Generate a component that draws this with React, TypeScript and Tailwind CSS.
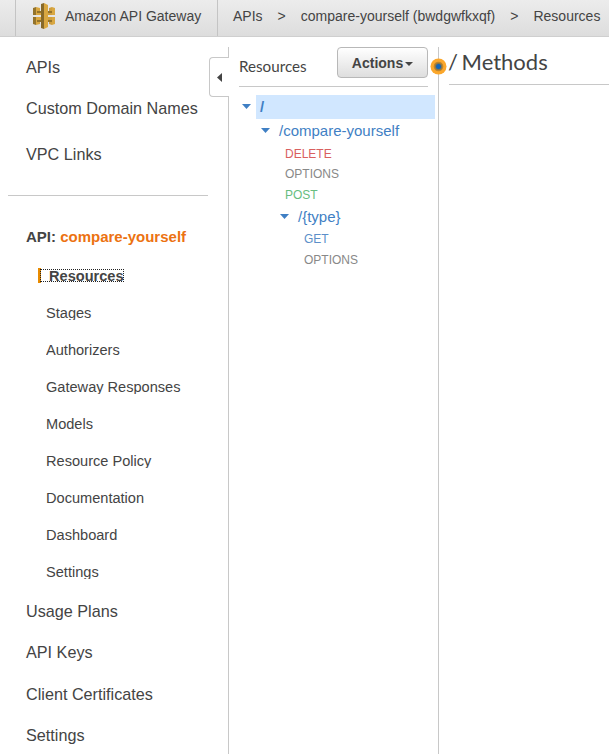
import React from "react";

const sans = "font-['Liberation_Sans',Arial,sans-serif]";
const lato = "font-[Lato,sans-serif]";

function GatewayLogo() {
  return (
    <svg width="22" height="26" viewBox="0 0 22 26" className="block shrink-0">
      <path d="M0 5l3-1v8H0zM0 14h3v8l-3-1z" fill="#93732b" />
      <path d="M3 4l4 1v3h1v4H3zM3 14h5v4H7v3l-4 1z" fill="#d9a741" />
      <path d="M4 8h4v2H4zM4 17h4v2H4z" fill="#93732b" />
      <path d="M8 1l3-1v26l-3-1z" fill="#876929" />
      <path d="M11 0l4 2v22l-4 2z" fill="#d9a741" />
      <path d="M15 8h1V5l3-1v8h-4zM15 14h4v8l-3-1v-3h-1z" fill="#cf9e3d" />
      <path d="M15 8h4v2h-4zM15 17h4v2h-4z" fill="#93732b" />
      <path d="M19 4l3 1v7h-3zM19 14h3v7l-3 1z" fill="#d9a741" />
    </svg>
  );
}

function Caret() {
  return (
    <svg width="9" height="5" viewBox="0 0 9 5" className="-mt-px block shrink-0">
      <path d="M0 0h9L4.5 5z" fill="#3f7fc4" />
    </svg>
  );
}

function NavItem({ label, height }: { label: string; height: string }) {
  return <a className={`flex items-center pl-[26px] text-[16.2px] ${height}`}>{label}</a>;
}

const subItems = [
  "Stages",
  "Authorizers",
  "Gateway Responses",
  "Models",
  "Resource Policy",
  "Documentation",
  "Dashboard",
  "Settings",
];

function Sidebar() {
  return (
    <nav className="w-[228px] shrink-0">
      <div className="h-[10px]" />
      <NavItem label="APIs" height="h-[41px]" />
      <NavItem label="Custom Domain Names" height="h-[41px]" />
      <NavItem label="VPC Links" height="h-[51px]" />
      <div className="mt-[15px] ml-2 h-px w-[200px] bg-[#c8c8c8]" />
      <div className="mt-[31px] flex h-5 items-center pl-[26px] text-[15px] font-bold">
        <span>
          API: <span className="text-[#ec7211]">compare-yourself</span>
        </span>
      </div>
      <div className="mt-[21px] ml-[38px] flex h-[15px] items-center">
        <div className="h-[15px] w-[3px] bg-[#e88b01]" />
        <div className="-ml-px h-[13px] w-[84px] border border-dotted border-[#222] pl-2 text-[14.58px] leading-[12px] font-bold">
          Resources
        </div>
      </div>
      <div className="mt-[22px] flex flex-col gap-[22px] pl-[46px]">
        {subItems.map((s) => (
          <a key={s} className="h-[15px] overflow-hidden text-[14.58px] leading-[17px]">
            {s}
          </a>
        ))}
      </div>
      <div className="h-[12px]" />
      <NavItem label="Usage Plans" height="h-[41px]" />
      <NavItem label="API Keys" height="h-[41px]" />
      <NavItem label="Client Certificates" height="h-[43px]" />
      <NavItem label="Settings" height="h-[39px]" />
    </nav>
  );
}

function Method({ name, className }: { name: string; className: string }) {
  return <div className={`flex items-center text-xs ${className}`}>{name}</div>;
}

function ResourceTree() {
  return (
    <section className="relative mt-[10px] w-[211px] shrink-0 border-x border-[#c8c8c8]">
      <button
        aria-label="Collapse navigation"
        className="absolute top-[10px] -left-5 flex h-10 w-5 items-center rounded-l border border-r-0 border-[#c8c8c8] bg-white pl-[7px]"
      >
        <svg width="5" height="9" viewBox="0 0 5 9">
          <path d="M5 0v9L0 4.5z" fill="#444" />
        </svg>
      </button>
      <div className="mr-[10px] ml-[10px] flex h-10 justify-between border-b border-[#c8c8c8]">
        <h2 className={`pt-[9px] text-[15.2px] leading-[20px] ${lato}`}>Resources</h2>
        <button className="flex h-[31px] w-[91px] items-center justify-center gap-[2px] rounded border border-[#b8b8b8] bg-gradient-to-b from-white to-[#dedede] text-sm font-bold">
          Actions
          <svg width="8" height="4" viewBox="0 0 8 4" className="mt-[2px]">
            <path d="M0 0h8L4 4z" fill="#444" />
          </svg>
        </button>
      </div>
      <div className="pt-2 text-[#3f7fc4]">
        <div className="flex h-6 items-center pr-[3px] pl-[13px] text-[15px]">
          <Caret />
          <span className="ml-[5px] flex h-6 flex-1 items-center bg-[#d1e7ff] pl-1 font-bold">/</span>
        </div>
        <div className="flex h-6 items-center gap-[9px] pl-8 text-[15px]">
          <Caret />
          /compare-yourself
        </div>
        <Method name="DELETE" className="h-[21px] pl-14 text-[#d9605f]" />
        <Method name="OPTIONS" className="h-5 pl-14 text-[#888]" />
        <Method name="POST" className="h-[21px] pl-14 text-[#67bd80]" />
        <div className="flex h-[23px] items-center gap-[9px] pt-px pl-[51px] text-[15px]">
          <Caret />
          /&#123;type&#125;
        </div>
        <Method name="GET" className="h-[21px] pl-[75px] text-[#5c8fc9]" />
        <Method name="OPTIONS" className="h-[21px] pl-[75px] text-[#888]" />
      </div>
      <svg width="17" height="17" viewBox="0 0 17 17" className="absolute top-[11px] -right-[9px]">
        <circle cx="8.5" cy="8.5" r="8" fill="#fba72b" />
        <circle cx="8.5" cy="8.5" r="4.8" fill="#ba8430" />
        <circle cx="8.5" cy="8.5" r="3.5" fill="#84734a" />
        <circle cx="8.5" cy="8.5" r="2.5" fill="#1166bb" />
      </svg>
    </section>
  );
}

function Header() {
  return (
    <header className="flex h-[37px] shrink-0 border-b border-[#cfcfcf] bg-gradient-to-b from-[#ececec] to-[#dddddd] text-sm whitespace-nowrap">
      <div className="ml-[15px] flex w-[203px] shrink-0 items-center border-x border-[#c4c4c4] pb-1 pl-[17px]">
        <GatewayLogo />
        <span className="ml-[10px]">Amazon API Gateway</span>
      </div>
      <div className="flex items-center gap-[15px] pb-1 pl-[15px]">
        <span>APIs</span>
        <span>&gt;</span>
        <span>compare-yourself (bwdgwfkxqf)</span>
        <span>&gt;</span>
        <span>Resources</span>
      </div>
    </header>
  );
}

export default function App() {
  return (
    <div className={`flex h-[754px] w-[609px] flex-col overflow-hidden bg-white text-[#444] ${sans}`}>
      <Header />
      <div className="flex min-h-0 flex-1">
        <Sidebar />
        <ResourceTree />
        <main className="mt-[10px] min-w-0 flex-1 pl-[10px]">
          <h1 className={`-ml-px h-[38px] text-[22px] leading-[30px] [word-spacing:-2px] ${lato}`}>/ Methods</h1>
          <div className="-mt-px h-px bg-[#c8c8c8]" />
        </main>
      </div>
    </div>
  );
}
